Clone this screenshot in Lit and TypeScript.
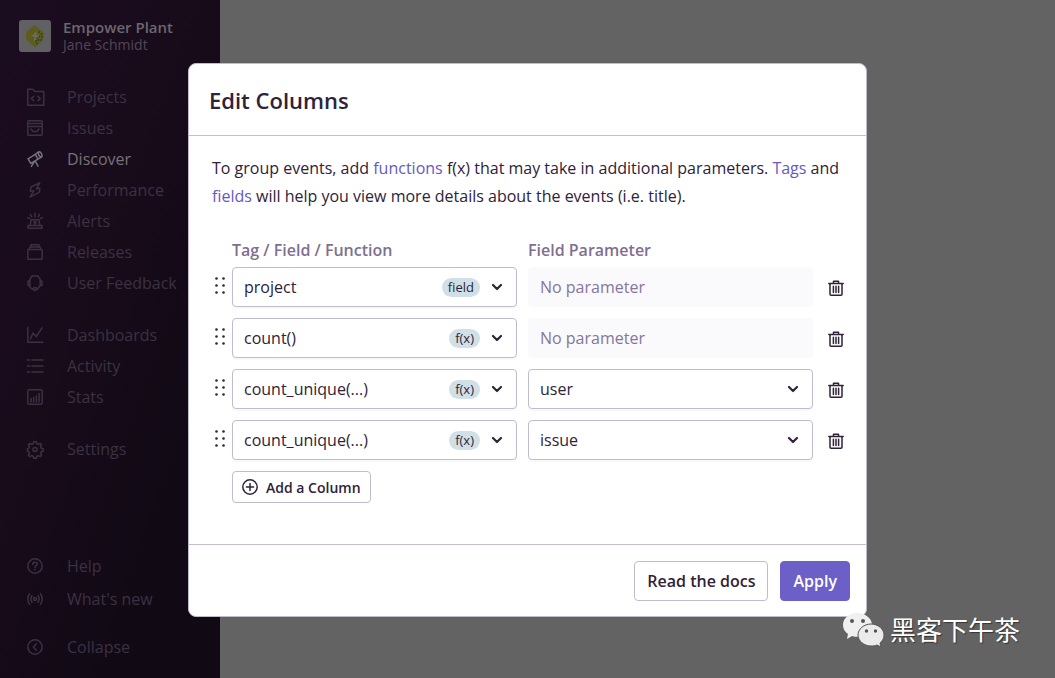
import { LitElement, html, css, svg, nothing } from "lit";
import { customElement, property, state } from "lit/decorators.js";
import { classMap } from "lit/directives/class-map.js";

const icons: Record<string, unknown> = {
  projects: svg`<path d="M.8 16.200V.2h5l2.200 2.400h8.800v13.600z"/><path d="M6.600 7.400 4.400 9.600 6.600 11.800M11 7.400l2.200 2.200L11 11.800"/>`,
  issues: svg`<rect x=".8" y=".8" width="14.400" height="14.400" rx="1"/><path d="M.8 3.600h14.400M.8 6.400h14.400M4 9l2 2.400h4L12 9"/>`,
  discover: svg`<path d="M1 7.800 8.200 3.400 11 8.200 3.800 12.400zM8.200 3.400 11.400 1C13.800.2 16.200 4.200 14.400 6.200L11 8.200M7.400 10.600 4.400 15.400M8.200 10l2.800 5.200"/><path d="M11.400 1c-.4 2.400.8 4.400 3 5.200"/>`,
  performance: svg`<path d="M12.800.8 4 5l-.6 4.200 3.400-.4L3 15.200l9.400-5 .4-4-3.400.6z"/>`,
  alerts: svg`<path d="M1 15.200v-2.800h14v2.800zM3 12.400l1.200-5.600h7.600l1.200 5.600M8 .6V4M3.400 1.400l1.400 2.400M12.600 1.400l-1.400 2.400M.6 4.600l2.200 1M15.400 4.600l-2.200 1M8 9v3.400"/><circle cx="8" cy="9.200" r="1"/>`,
  releases: svg`<rect x=".8" y="5.600" width="14.400" height="9.600" rx=".8"/><path d="M2 5.600 3 3h10l1 2.600M4 3V.8h8V3"/>`,
  feedback: svg`<path d="M2.800 6V4.400L5.200 1h5.600l2.400 3.400V6M2.800 11v1l2.400 2h1.200"/><path d="M2.800 6H1v4.400h1.800zM13.200 6H15v4.400h-1.800zM13.200 10.400 10.600 14"/><circle cx="8" cy="14" r="1.500"/>`,
  dashboards: svg`<path d="M.8.4v14.800h15M3.400 12 6 6l3.200 3.600L15 .8"/>`,
  activity: svg`<path d="M.4 2h2.400M5 2h11M.4 8h2.400M5 8h11M.4 14h2.400M5 14h11"/>`,
  stats: svg`<rect x=".8" y=".8" width="14.400" height="14.400" rx="1.500"/><path d="M4 13V9.400M6.700 13V8.600M9.400 13V7M12.100 13V4.400"/>`,
  settings: svg`<path d="M6.700.8h2.600l.5 2 1.500.6 1.800-1 1.500 1.500-1 1.800.6 1.500 2 .5v2.600l-2 .5-.6 1.500 1 1.800-1.500 1.500-1.800-1-1.500.6-.5 2H6.700l-.5-2-1.500-.6-1.800 1-1.500-1.500 1-1.800-.6-1.500-1.400-.5V7.700l1.400-.5.6-1.500-1-1.800 1.500-1.500 1.800 1 1.500-.6z"/><circle cx="8" cy="8.500" r="2"/>`,
  help: svg`<circle cx="8" cy="8" r="7.200"/><path d="M5.800 6.400C6 3.600 10.200 3.800 10.200 6.200 10.200 7.700 8 7.700 8 9.400M8 11.600v.4"/>`,
  news: svg`<circle cx="8" cy="8" r="1.500"/><path d="M5 4.800C3.700 6.600 3.700 9.400 5 11.200M11 4.800c1.300 1.800 1.300 4.600 0 6.400M2.600 2.800C.2 5.600.2 10.400 2.600 13.200M13.400 2.800c2.400 2.800 2.400 7.600 0 10.400"/>`,
  collapse: svg`<circle cx="8" cy="8" r="7.200"/><path d="M9.400 4.800 6.400 8l3 3.200"/>`,
  add: svg`<circle cx="8" cy="8" r="7.200"/><path d="M8 4.400v7.200M4.400 8h7.200"/>`,
  trash: svg`<path d="M.8 3.500h14.400M5.500 3V1.200h5V3M2 3.500v10.700q0 1 1 1h10q1 0 1-1V3.500M5.400 6.200v6.400M8 6.200v6.400M10.600 6.200v6.400"/>`,
  chevron: svg`<path class="thick" d="M4 6l4 4 4-4"/>`,
};

const icon = (name: string) =>
  html`<svg class="icon" viewBox="0 0 16 16" aria-hidden="true">${icons[name]}</svg>`;

const iconStyles = css`
  .icon {
    display: block;
    flex: none;
    width: 16px;
    height: 16px;
    fill: none;
    stroke: currentColor;
    stroke-width: 1.5;
    stroke-linejoin: round;
    stroke-linecap: round;
    overflow: visible;
  }
  .thick {
    stroke-width: 2.2;
  }
`;

interface NavItem {
  icon: string;
  label: string;
}

const primaryNav: NavItem[][] = [
  [
    { icon: "projects", label: "Projects" },
    { icon: "issues", label: "Issues" },
    { icon: "discover", label: "Discover" },
    { icon: "performance", label: "Performance" },
    { icon: "alerts", label: "Alerts" },
    { icon: "releases", label: "Releases" },
    { icon: "feedback", label: "User Feedback" },
  ],
  [
    { icon: "dashboards", label: "Dashboards" },
    { icon: "activity", label: "Activity" },
    { icon: "stats", label: "Stats" },
  ],
  [{ icon: "settings", label: "Settings" }],
];

@customElement("side-bar")
class SideBar extends LitElement {
  @property() active = "Discover";

  static styles = [
    iconStyles,
    css`
      :host {
        display: flex;
        flex-direction: column;
        box-sizing: border-box;
        width: 220px;
        flex: none;
        padding: 19px 0 15px;
        background: linear-gradient(110deg, #1b0d20 0%, #180b1a 40%, #110a15 75%);
        color: #3b3142;
      }
      .org {
        display: flex;
        align-items: center;
        gap: 12px;
        padding-left: 19px;
        margin-bottom: 28px;
      }
      .logo {
        width: 32px;
        height: 32px;
        flex: none;
      }
      .name,
      .user {
        line-height: 17px;
      }
      .name {
        font-size: 15px;
        font-weight: 600;
        color: #6c666e;
      }
      .user {
        font-size: 14px;
        color: #514758;
      }
      .group {
        display: flex;
        flex-direction: column;
        margin-bottom: 21px;
      }
      .item {
        display: flex;
        align-items: center;
        gap: 24px;
        height: 31px;
        padding-left: 27px;
        font-size: 16px;
        color: inherit;
        text-decoration: none;
        white-space: nowrap;
      }
      .item.active {
        color: #77727a;
      }
      .bottom {
        margin: auto 0 0;
      }
      .bottom .item {
        height: 33px;
      }
      .bottom .toggle {
        border: 0;
        background: none;
        font: inherit;
        font-size: 16px;
        cursor: pointer;
        margin-top: 15px;
      }
    `,
  ];

  private link(item: NavItem) {
    return html`<a
      class=${classMap({ item: true, active: item.label === this.active })}
      href="#"
      >${icon(item.icon)}<span>${item.label}</span></a
    >`;
  }

  render() {
    return html`
      <div class="org">
        <svg class="logo" viewBox="0 0 32 32" aria-hidden="true">
          <rect width="32" height="32" rx="3" fill="#616062" />
          <path
            d="M15.500 5 24 12q1.600 1.400 1.200 3l-.8 3.500q-.4 1.400-1.400 2.500L16 27.500 8.500 20.500q-1.300-1-1.400-2.500l-.1-4q0-1.600 1-2.500z"
            fill="#5c5c1c"
          />
          <path d="m17.500 11-5.500 5.500h3.500l-1 5.500 6.500-6.500h-3.500z" fill="#6c6c62" />
          <path
            d="M20 12h.1M22.500 14h.1M18 18h.1M20.500 16.500h.1M23 17h.1M17 21h.1M19.500 20h.1M22 20h.1M18 23.500h.1"
            stroke="#2a2c14"
            stroke-width="1.400"
            stroke-linecap="round"
          />
        </svg>
        <div>
          <div class="name">Empower Plant</div>
          <div class="user">Jane Schmidt</div>
        </div>
      </div>
      ${primaryNav.map(
        (group) => html`<nav class="group">${group.map((i) => this.link(i))}</nav>`
      )}
      <nav class="group bottom">
        ${this.link({ icon: "help", label: "Help" })}
        ${this.link({ icon: "news", label: "What's new" })}
        <button class="item toggle">${icon("collapse")}<span>Collapse</span></button>
      </nav>
    `;
  }
}

interface Column {
  field: string;
  kind: string;
  parameter?: string;
}

@customElement("column-editor")
class ColumnEditor extends LitElement {
  @state() private columns: Column[] = [
    { field: "project", kind: "field" },
    { field: "count()", kind: "f(x)" },
    { field: "count_unique(...)", kind: "f(x)", parameter: "user" },
    { field: "count_unique(...)", kind: "f(x)", parameter: "issue" },
  ];

  static styles = [
    iconStyles,
    css`
      :host {
        display: block;
        box-sizing: border-box;
        width: 100%;
        max-width: 679px;
        background: #fff;
        border: 1px solid #c2bbcf;
        border-radius: 8px;
        color: #2f2239;
        font-size: 16px;
      }
      header {
        padding: 22px 20px 21px;
        border-bottom: 1px solid #c6becf;
      }
      h2 {
        margin: 0;
        font-size: 22px;
        font-weight: 600;
        line-height: 28px;
      }
      .body {
        padding: 18px 18px 41px 23px;
      }
      p {
        margin: 0 0 28px;
        line-height: 28px;
      }
      a {
        color: #6559c5;
        text-decoration: none;
      }
      .row {
        display: flex;
        align-items: center;
        margin-bottom: 11px;
      }
      .fields {
        flex: 1;
        display: grid;
        grid-template-columns: 1fr 1fr;
        gap: 11px;
      }
      .labels {
        margin: 0 35px 5px 20px;
        font-weight: 600;
        line-height: 24px;
        color: #80708f;
      }
      .handle {
        width: 20px;
        height: 20px;
        flex: none;
        fill: currentColor;
      }
      .picker {
        display: grid;
        grid-template-columns: 1fr auto;
        align-items: center;
      }
      select,
      .empty {
        box-sizing: border-box;
        width: 100%;
        height: 40px;
        padding: 0 11px;
        border: 1px solid #c2bbcf;
        border-radius: 4px;
        font: inherit;
      }
      select {
        grid-area: 1 / 1 / 2 / 3;
        appearance: none;
        background: #fff;
        color: inherit;
        box-shadow: 0 2px 1px #f8f7fa;
      }
      .empty {
        border-color: #faf9fb;
        background: #faf9fb;
        color: #2f2239;
      }
      .empty::placeholder {
        color: #85779a;
        opacity: 1;
      }
      .adornment {
        grid-area: 1 / 2;
        display: flex;
        align-items: center;
        gap: 9px;
        padding-right: 12px;
        pointer-events: none;
      }
      .badge {
        padding: 0 6px;
        border-radius: 10px;
        background: #d0e0e6;
        font-size: 13px;
        line-height: 19px;
      }
      button {
        font: inherit;
        color: inherit;
        cursor: pointer;
      }
      .remove {
        width: 24px;
        height: 24px;
        margin-left: 11px;
        padding: 5px 4px 3px;
        border: 0;
        background: none;
      }
      .button {
        display: inline-flex;
        align-items: center;
        justify-content: center;
        box-sizing: border-box;
        height: 40px;
        padding: 0 12px;
        border: 1px solid #c2bbcf;
        border-radius: 4px;
        background: #fff;
        font-weight: 600;
      }
      .add {
        height: 32px;
        gap: 8px;
        padding: 0 9px;
        margin-left: 20px;
        font-size: 14px;
      }
      footer {
        display: flex;
        justify-content: flex-end;
        gap: 12px;
        padding: 16px 16px 15px;
        border-top: 1px solid #c6becf;
      }
      .primary {
        border-color: #6c5fc7;
        background: #6c5fc7;
        color: #fff;
      }
    `,
  ];

  private remove(index: number) {
    this.columns = this.columns.filter((_, i) => i !== index);
  }

  private picker(label: string, value: string, kind?: string) {
    return html`<div class="picker">
      <select aria-label=${label}>
        <option>${value}</option>
      </select>
      <span class="adornment"
        >${kind ? html`<span class="badge">${kind}</span>` : nothing}${icon("chevron")}</span
      >
    </div>`;
  }

  render() {
    return html`
      <header><h2>Edit Columns</h2></header>
      <div class="body">
        <p>
          To group events, add <a href="#">functions</a> f(x) that may take in additional
          parameters. <a href="#">Tags</a> and <a href="#">fields</a> will help you view more
          details about the events (i.e. title).
        </p>
        <div class="fields labels">
          <span>Tag / Field / Function</span><span>Field Parameter</span>
        </div>
        ${this.columns.map(
          (column, i) => html`<div class="row">
            <svg class="handle" viewBox="0 0 20 20" aria-hidden="true">
              ${[1.5, 8.5, 15.5].map(
                (y) => svg`<circle cx="4.500" cy=${y} r="1.300"/><circle cx="11.500" cy=${y} r="1.300"/>`
              )}
            </svg>
            <div class="fields">
              ${this.picker("Tag / Field / Function", column.field, column.kind)}
              ${column.parameter
                ? this.picker("Field Parameter", column.parameter)
                : html`<input
                    class="empty"
                    aria-label="Field Parameter"
                    placeholder="No parameter"
                    readonly
                  />`}
            </div>
            <button class="remove" aria-label="Remove column" @click=${() => this.remove(i)}>
              ${icon("trash")}
            </button>
          </div>`
        )}
        <button class="button add">${icon("add")}Add a Column</button>
      </div>
      <footer>
        <button class="button">Read the docs</button>
        <button class="button primary">Apply</button>
      </footer>
    `;
  }
}

@customElement("app-root")
class AppRoot extends LitElement {
  static styles = css`
    :host {
      display: flex;
      position: relative;
      min-height: 100vh;
      background: #636363;
      font-family: "Open Sans", "Noto Sans CJK SC", sans-serif;
    }
    .overlay {
      position: absolute;
      inset: 0;
      display: flex;
      justify-content: center;
      align-items: flex-start;
      padding: 63px 16px;
    }
    .mark {
      position: absolute;
      right: 35px;
      bottom: 29px;
      display: flex;
      align-items: center;
      gap: 6px;
      color: #fff;
      font-family: "Noto Sans CJK SC", sans-serif;
      font-size: 26px;
      line-height: 40px;
      text-shadow: 1px 1px 1px #333;
    }
    .chat {
      width: 42px;
      height: 36px;
    }
  `;

  render() {
    return html`
      <side-bar></side-bar>
      <div class="overlay">
        <column-editor role="dialog" aria-label="Edit Columns"></column-editor>
      </div>
      <div class="mark">
        <svg class="chat" viewBox="0 0 42 36" aria-hidden="true">
          <path
            d="M15 2C7 2 1 7 1 14c0 4 2 7 5 9l-1 5 5-3c10 3 20-2 20-11C30 7 23 2 15 2z"
            fill="#f0f0f0"
          />
          <path
            d="M29 13c-7 0-13 5-13 11s6 11 13 11c2 0 4 0 6-1l4 2-1-4c2-2 4-4 4-8 0-6-6-11-13-11z"
            fill="#ebebeb"
            stroke="#555"
            stroke-width="1"
          />
          <g fill="#555">
            <circle cx="10" cy="10" r="2" />
            <circle cx="21" cy="10" r="2" />
            <circle cx="24.500" cy="20" r="1.700" />
            <circle cx="33.500" cy="20" r="1.700" />
          </g>
        </svg>
        <span>黑客下午茶</span>
      </div>
    `;
  }
}
